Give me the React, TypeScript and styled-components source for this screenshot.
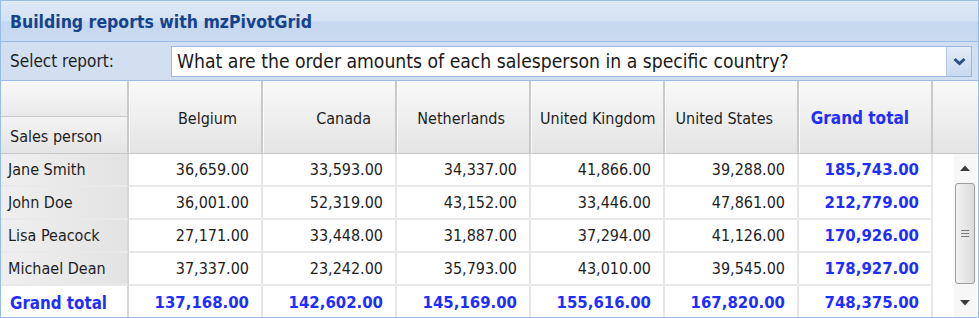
import React from "react";
import styled, { createGlobalStyle } from "styled-components";

const GlobalStyle = createGlobalStyle`
  html, body {
    margin: 0;
    padding: 0;
    background: #ffffff;
  }
  * {
    box-sizing: border-box;
  }
`;

const FONT = `"DejaVu Sans Condensed", "DejaVu Sans", Tahoma, sans-serif`;

const Panel = styled.div`
  width: 979px;
  height: 318px;
  border: 1px solid #99bbe8;
  display: flex;
  flex-direction: column;
  overflow: hidden;
  font-family: ${FONT};
  color: #1e1e1e;
`;

const TitleBar = styled.div`
  height: 41px;
  flex: none;
  display: flex;
  align-items: center;
  padding: 0 9px;
  border-top: 1px solid #e6eef9;
  border-bottom: 1px solid #99bbe8;
  background: linear-gradient(
    #dde8f6 0%,
    #d4e2f3 48%,
    #c6d8ef 52%,
    #cadbf0 100%
  );
  color: #15428b;
  font-weight: bold;
  font-size: 17.5px;
`;

const Toolbar = styled.div`
  height: 39px;
  flex: none;
  display: flex;
  align-items: center;
  padding: 0 4px 0 9px;
  background: #d1dff1;
  border-bottom: 1px solid #99bbe8;
  font-size: 17px;
`;

const Label = styled.span`
  width: 161px;
  flex: none;
`;

const Combo = styled.div`
  flex: 1;
  height: 31px;
  display: flex;
  border: 1px solid #9cb8de;
  background: #ffffff;
  margin-right: 2px;
`;

const ComboText = styled.div`
  flex: 1;
  display: flex;
  align-items: center;
  padding-left: 5px;
  font-size: 19.2px;
  color: #1a1a1a;
  white-space: nowrap;
  overflow: hidden;
`;

const Trigger = styled.div`
  width: 25px;
  flex: none;
  display: flex;
  align-items: center;
  justify-content: center;
  border-left: 1px solid #b3c8e6;
  background: linear-gradient(#e3ecf8, #c8d9ef);
`;

const Header = styled.div`
  height: 73px;
  flex: none;
  display: grid;
  grid-template-columns: 128px repeat(6, 134px) 1fr;
  border-bottom: 1px solid #c8c8c8;
`;

const HeaderCell = styled.div<{ $blue?: boolean }>`
  line-height: 75px;
  text-align: right;
  padding: 0 ${({ $blue }) => ($blue ? "22px" : "24px")} 0 9px;
  white-space: nowrap;
  overflow: hidden;
  font-size: ${({ $blue }) => ($blue ? "17px" : "16px")};
  background: linear-gradient(#f9f9f9, #e4e4e4);
  border-right: 2px solid #c9c9c9;
  box-shadow: inset 1px 0 #fbfbfb;
  color: ${({ $blue }) => ($blue ? "#1e2eff" : "#1e1e1e")};
  font-weight: ${({ $blue }) => ($blue ? "bold" : "normal")};
`;

const CornerStack = styled.div`
  display: flex;
  flex-direction: column;
  border-right: 2px solid #c9c9c9;
`;

const CornerTop = styled.div`
  height: 36px;
  flex: none;
  background: linear-gradient(#f9f9f9, #eaeaea);
  border-bottom: 1px solid #c9c9c9;
`;

const CornerBottom = styled.div`
  flex: 1;
  display: flex;
  align-items: flex-end;
  padding: 0 0 7px 9px;
  font-size: 16px;
  background: linear-gradient(#f3f3f3, #e4e4e4);
`;

const ScrollHead = styled.div`
  background: linear-gradient(#f9f9f9, #e4e4e4);
`;

const Body = styled.div`
  flex: 1;
  display: flex;
  min-height: 0;
`;

const Rows = styled.div`
  display: grid;
  grid-template-columns: 128px repeat(6, 134px);
  grid-auto-rows: 33px;
  align-content: start;
`;

const RowHead = styled.div<{ $blue?: boolean; $last?: boolean }>`
  display: flex;
  align-items: center;
  padding-left: ${({ $blue }) => ($blue ? "9px" : "7px")};
  font-size: ${({ $blue }) => ($blue ? "16.8px" : "16px")};
  white-space: nowrap;
  background: ${({ $blue }) =>
    $blue ? "#ffffff" : "linear-gradient(to right, #efefef, #e3e3e3)"};
  border-right: 2px solid #d6d6d6;
  border-bottom: ${({ $last }) => ($last ? "none" : "2px solid #e9e9e9")};
  color: ${({ $blue }) => ($blue ? "#1e2eff" : "#1e1e1e")};
  font-weight: ${({ $blue }) => ($blue ? "bold" : "normal")};
`;

const Cell = styled.div<{ $blue?: boolean; $last?: boolean }>`
  display: flex;
  align-items: center;
  justify-content: flex-end;
  padding-right: 12px;
  font-size: ${({ $blue }) => ($blue ? "16.6px" : "16px")};
  white-space: nowrap;
  background: #ffffff;
  border-right: 2px solid #e6e6e6;
  border-bottom: ${({ $last }) => ($last ? "none" : "2px solid #e9e9e9")};
  color: ${({ $blue }) => ($blue ? "#1e2eff" : "#1e1e1e")};
  font-weight: ${({ $blue }) => ($blue ? "bold" : "normal")};
`;

const Filler = styled.div`
  flex: 1;
  background: #ffffff;
`;

const ScrollBar = styled.div`
  width: 22px;
  flex: none;
  margin-right: 2px;
  display: flex;
  flex-direction: column;
  background: #f7f7f7;
`;

const Arrow = styled.div`
  height: 28px;
  flex: none;
  display: flex;
  align-items: center;
  justify-content: center;
`;

const Thumb = styled.div`
  flex: 1;
  margin: 1px 1px 4px;
  border: 1px solid #9d9d9d;
  border-radius: 3px;
  background: linear-gradient(to right, #f2f2f2, #dcdcdc);
  display: flex;
  align-items: center;
  justify-content: center;
`;

const Track = styled.div`
  height: 1px;
  flex: none;
`;

type Row = { name: string; values: string[]; total: string };

const countries = [
  "Belgium",
  "Canada",
  "Netherlands",
  "United Kingdom",
  "United States",
];

const rows: Row[] = [
  {
    name: "Jane Smith",
    values: ["36,659.00", "33,593.00", "34,337.00", "41,866.00", "39,288.00"],
    total: "185,743.00",
  },
  {
    name: "John Doe",
    values: ["36,001.00", "52,319.00", "43,152.00", "33,446.00", "47,861.00"],
    total: "212,779.00",
  },
  {
    name: "Lisa Peacock",
    values: ["27,171.00", "33,448.00", "31,887.00", "37,294.00", "41,126.00"],
    total: "170,926.00",
  },
  {
    name: "Michael Dean",
    values: ["37,337.00", "23,242.00", "35,793.00", "43,010.00", "39,545.00"],
    total: "178,927.00",
  },
];

const grandTotals = [
  "137,168.00",
  "142,602.00",
  "145,169.00",
  "155,616.00",
  "167,820.00",
  "748,375.00",
];

const ChevronDown = () => (
  <svg width="13" height="9" viewBox="0 0 13 9">
    <polyline
      points="1.5,2 6.5,6.5 11.5,2"
      fill="none"
      stroke="#2d4f85"
      strokeWidth="3"
      strokeLinejoin="miter"
    />
  </svg>
);

const Tri = ({ up }: { up?: boolean }) => (
  <svg width="10" height="6" viewBox="0 0 10 6">
    <polygon
      points={up ? "0,6 5,0.5 10,6" : "0,0 10,0 5,5.5"}
      fill="#3c3c3c"
    />
  </svg>
);

const Grip = () => (
  <svg width="8" height="7" viewBox="0 0 8 7">
    <path d="M0 0.5h8M0 3.5h8M0 6.5h8" stroke="#7a7a7a" strokeWidth="1" />
  </svg>
);

export default function App() {
  return (
    <>
      <GlobalStyle />
      <Panel>
        <TitleBar>Building reports with mzPivotGrid</TitleBar>
        <Toolbar>
          <Label>Select report:</Label>
          <Combo>
            <ComboText>
              What are the order amounts of each salesperson in a specific
              country?
            </ComboText>
            <Trigger>
              <ChevronDown />
            </Trigger>
          </Combo>
        </Toolbar>
        <Header>
          <CornerStack>
            <CornerTop />
            <CornerBottom>Sales person</CornerBottom>
          </CornerStack>
          {countries.map((c) => (
            <HeaderCell key={c}>{c}</HeaderCell>
          ))}
          <HeaderCell $blue>Grand total</HeaderCell>
          <ScrollHead />
        </Header>
        <Body>
          <Rows>
            {rows.map((r) => (
              <React.Fragment key={r.name}>
                <RowHead>{r.name}</RowHead>
                {r.values.map((v, i) => (
                  <Cell key={i}>{v}</Cell>
                ))}
                <Cell $blue>{r.total}</Cell>
              </React.Fragment>
            ))}
            <RowHead $blue $last>
              Grand total
            </RowHead>
            {grandTotals.map((v, i) => (
              <Cell key={i} $blue $last>
                {v}
              </Cell>
            ))}
          </Rows>
          <Filler />
          <ScrollBar>
            <Arrow>
              <Tri up />
            </Arrow>
            <Thumb>
              <Grip />
            </Thumb>
            <Track />
            <Arrow>
              <Tri />
            </Arrow>
          </ScrollBar>
        </Body>
      </Panel>
    </>
  );
}
